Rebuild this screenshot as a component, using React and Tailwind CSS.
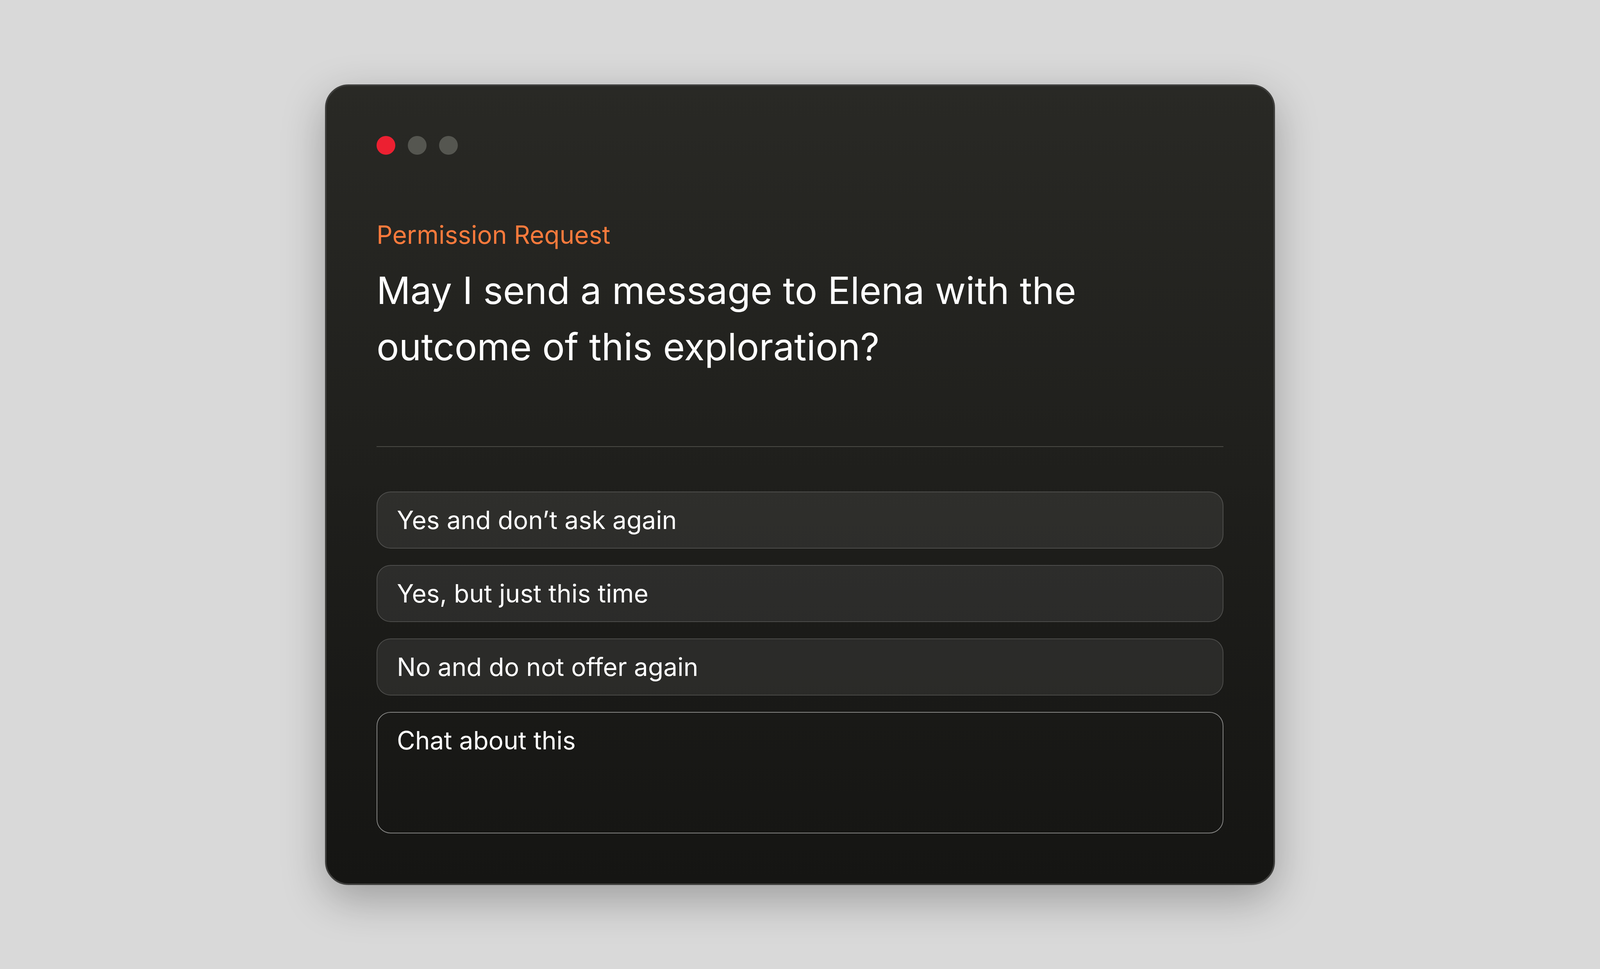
import React from 'react';

const options = [
  "Yes and don\u2019t ask again",
  'Yes, but just this time',
  'No and do not offer again',
];

export default function App() {
  return (
    <div className="w-full h-screen bg-[#d9d9d9] flex items-center justify-center font-['Inter','Noto_Sans',sans-serif]">
      <div className="w-[2432px] rounded-[60px] border-[4px] border-[#3e3e3c] bg-gradient-to-b from-[#292925] to-[#151513] p-[128px] shadow-[0_36px_110px_rgba(0,0,0,0.28)]">
        {/* Window dots */}
        <div className="flex items-center gap-[32px]">
          <span className="w-[48px] h-[48px] rounded-full bg-[#ec2031]"></span>
          <span className="w-[48px] h-[48px] rounded-full bg-[#555650]"></span>
          <span className="w-[48px] h-[48px] rounded-full bg-[#555650]"></span>
        </div>

        <p className="mt-[157px] text-[64px] leading-[96px] text-[#fb7a3c]">Permission Request</p>
        <h1 className="mt-[22px] text-[96px] leading-[144px] text-white">
          May I send a message to Elena with the outcome of this exploration?
        </h1>

        <div className="mt-[183px] h-[2px] bg-[#4b4b46]"></div>

        <div className="mt-[114px] flex flex-col gap-[42px]">
          {options.map((label) => (
            <button
              key={label}
              className="w-full text-left rounded-[36px] border-[2px] border-white/[0.16] bg-white/[0.075] px-[50px] py-[23px] text-[64px] leading-[96px] text-white"
            >
              {label}
            </button>
          ))}
          <div className="h-[311px] rounded-[36px] border-[2px] border-white/[0.48] px-[50px] py-[23px] text-[64px] leading-[96px] text-white">
            Chat about this
          </div>
        </div>
      </div>
    </div>
  );
}
